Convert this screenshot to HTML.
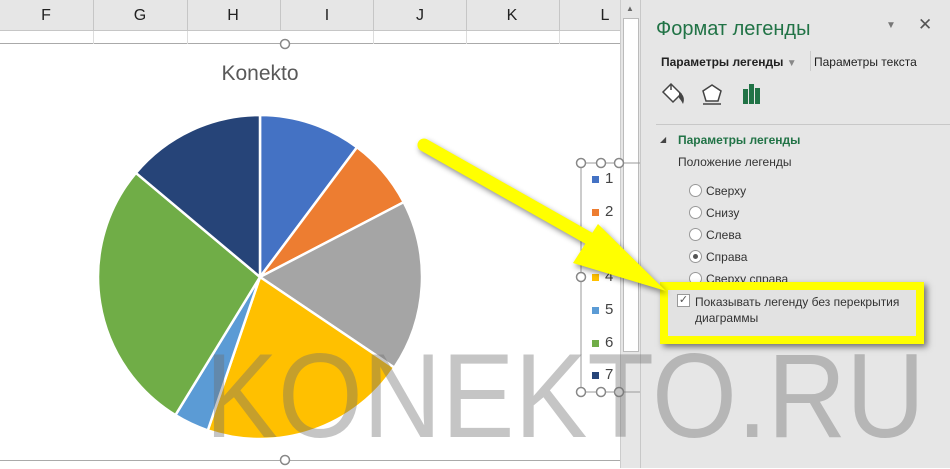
<!DOCTYPE html><html><head><meta charset="utf-8"><style>
body{margin:0;width:950px;height:468px;overflow:hidden;background:#fff;font-family:"Liberation Sans",sans-serif;position:relative}
.a{position:absolute}
.hdr{left:0;top:0;width:622px;height:30px;background:#e6e6e6;border-bottom:1px solid #c6c6c6}
.col{top:0;height:30px;border-left:1px solid #c6c6c6}
.cl{top:7px;font-size:16px;color:#222;width:20px;text-align:center}
.pane{left:640px;top:0;width:310px;height:468px;background:#e6e6e6;border-left:1px solid #c8c8c8}
.t{color:#333;font-size:12px}
.rad{width:11px;height:11px;border:1px solid #999;border-radius:50%;background:#fff}
.lg{font-size:15px;color:#444}
.sq{width:7px;height:7px}
</style></head><body>
<div class="a hdr"></div>
<div class="a col" style="left:93px"></div><div class="a col" style="left:187px"></div><div class="a col" style="left:280px"></div><div class="a col" style="left:373px"></div><div class="a col" style="left:466px"></div><div class="a col" style="left:559px"></div>
<div class="a cl" style="left:36px">F</div><div class="a cl" style="left:130px">G</div><div class="a cl" style="left:223px">H</div><div class="a cl" style="left:317px">I</div><div class="a cl" style="left:410px">J</div><div class="a cl" style="left:502px">K</div><div class="a cl" style="left:595px">L</div>
<div class="a" style="left:0;top:30px;width:620px;height:13px;border-bottom:1px solid #aaa"></div>
<div class="a" style="left:0;top:460px;width:620px;height:8px;border-top:1px solid #aaa"></div>
<div class="a" style="left:93px;top:31px;height:13px;border-left:1px solid #ddd"></div><div class="a" style="left:187px;top:31px;height:13px;border-left:1px solid #ddd"></div><div class="a" style="left:373px;top:31px;height:13px;border-left:1px solid #ddd"></div><div class="a" style="left:466px;top:31px;height:13px;border-left:1px solid #ddd"></div><div class="a" style="left:559px;top:31px;height:13px;border-left:1px solid #ddd"></div>
<div class="a" style="left:620px;top:0;width:20px;height:468px;background:#e6e6e6;border-left:1px solid #ccc"></div>
<div class="a" style="left:623px;top:18px;width:14px;height:332px;background:#fff;border:1px solid #bbb"></div>
<div class="a" style="left:626px;top:4px;font-size:8px;color:#666">▲</div>
<div class="a" style="left:0;top:62px;width:520px;text-align:center;font-size:21px;color:#595959">Konekto</div>
<svg class="a" style="left:0;top:0" width="640" height="468" id="pie">
<circle cx="285" cy="44" r="4.5" fill="#fff" stroke="#888" stroke-width="1.5"/>
<circle cx="285" cy="460" r="4.5" fill="#fff" stroke="#888" stroke-width="1.5"/>
<rect x="581" y="163" width="60" height="229" fill="none" stroke="#999"/>
<g fill="#fff" stroke="#888" stroke-width="1.5"><circle cx="581" cy="163" r="4.5"/><circle cx="601" cy="163" r="4.5"/><circle cx="619" cy="163" r="4.5"/><circle cx="581" cy="277" r="4.5"/><circle cx="581" cy="392" r="4.5"/><circle cx="601" cy="392" r="4.5"/><circle cx="619" cy="392" r="4.5"/></g>
</svg>
<div class="a sq" style="left:592px;top:176px;background:#4472c4"></div><div class="a lg" style="left:605px;top:170px">1</div>
<div class="a sq" style="left:592px;top:209px;background:#ed7d31"></div><div class="a lg" style="left:605px;top:203px">2</div>
<div class="a sq" style="left:592px;top:274px;background:#ffc000"></div><div class="a lg" style="left:605px;top:268px">4</div>
<div class="a sq" style="left:592px;top:307px;background:#5b9bd5"></div><div class="a lg" style="left:605px;top:301px">5</div>
<div class="a sq" style="left:592px;top:340px;background:#70ad47"></div><div class="a lg" style="left:605px;top:334px">6</div>
<div class="a sq" style="left:592px;top:372px;background:#264478"></div><div class="a lg" style="left:605px;top:366px">7</div>
<div class="a pane">
<div class="a" style="left:15px;top:18px;font-size:20px;color:#217346">Формат легенды</div>
<div class="a" style="left:245px;top:20px;font-size:10px;color:#777">▼</div>
<div class="a" style="left:277px;top:15px;font-size:17px;color:#555">✕</div>
<div class="a" style="left:20px;top:55px;font-size:12px;font-weight:bold;color:#222">Параметры легенды <span style="color:#888;font-size:10px">▼</span></div>
<div class="a" style="left:169px;top:51px;height:20px;border-left:1px solid #ccc"></div>
<div class="a" style="left:173px;top:55px;font-size:12px;color:#222">Параметры текста</div>
<svg class="a" style="left:18px;top:80px" width="110" height="30">
<path d="M4 12 L12 4 L22 14 L14 22 Z" fill="#fff" stroke="#444" stroke-width="1.5"/><path d="M12 4 V10" stroke="#444" stroke-width="1.5"/><path d="M20 12 Q27 16 24 24 Q22 20 20 18Z" fill="#444"/>
<path d="M53 5 L62 11 L59 21 L47 21 L44 11 Z" fill="#fff" stroke="#444" stroke-width="1.5"/><path d="M44 24 H62" stroke="#444" stroke-width="1.5"/>
<rect x="84" y="9" width="5" height="15" fill="#217346"/><rect x="90" y="4" width="5" height="20" fill="#217346"/><rect x="96" y="8" width="5" height="16" fill="#217346"/>
</svg>
<div class="a" style="left:15px;top:124px;width:295px;border-top:1px solid #c8c8c8"></div>
<div class="a" style="left:19px;top:135px;font-size:8px;color:#444">◢</div>
<div class="a" style="left:37px;top:133px;font-size:12px;font-weight:bold;color:#217346">Параметры легенды</div>
<div class="a t" style="left:37px;top:155px">Положение легенды</div>
<div class="a rad" style="left:48px;top:184px"></div><div class="a t" style="left:65px;top:184px">Сверху</div>
<div class="a rad" style="left:48px;top:206px"></div><div class="a t" style="left:65px;top:206px">Снизу</div>
<div class="a rad" style="left:48px;top:228px"></div><div class="a t" style="left:65px;top:228px">Слева</div>
<div class="a rad" style="left:48px;top:250px"></div><div class="a" style="left:52px;top:254px;width:5px;height:5px;border-radius:50%;background:#555"></div><div class="a t" style="left:65px;top:250px">Справа</div>
<div class="a rad" style="left:48px;top:272px"></div><div class="a t" style="left:65px;top:272px">Сверху справа</div>
</div>
<div class="a" style="left:660px;top:282px;width:248px;height:46px;background:#e2e2e2;border:8px solid #ffff00;box-shadow:3px 3px 6px rgba(0,0,0,.5)"></div>
<div class="a" style="left:677px;top:294px;width:11px;height:11px;border:1px solid #999;background:#fff;font-size:11px;line-height:11px;color:#555;text-align:center">✓</div>
<div class="a t" style="left:695px;top:294px;line-height:16px;color:#333">Показывать легенду без перекрытия<br>диаграммы</div>
<svg class="a" style="left:0;top:0;filter:drop-shadow(2px 3px 3px rgba(0,0,0,.45))" width="950" height="468">
<path d="M424 145 L606 248" stroke="#ffff00" stroke-width="13" stroke-linecap="round"/>
<polygon points="573,263 598,224 666,291" fill="#ffff00"/>
</svg>
<div class="a" style="left:205px;top:336px;font-size:120px;color:rgba(110,110,110,.4);line-height:120px;white-space:nowrap;transform:scaleX(0.91);transform-origin:0 0">KONEKTO.RU</div>
<script>
var s=document.getElementById('pie'),cx=260,cy=277,r=162;
var d=[[0,36.8,'#4472c4'],[36.8,62.5,'#ed7d31'],[62.5,124,'#a5a5a5'],[124,198.8,'#ffc000'],[198.8,211.5,'#5b9bd5'],[211.5,310,'#70ad47'],[310,360,'#264478']];
var h='';
function p(a){a=a*Math.PI/180;return (cx+r*Math.sin(a)).toFixed(1)+' '+(cy-r*Math.cos(a)).toFixed(1);}
d.forEach(function(x){h+='<path d="M'+cx+' '+cy+' L'+p(x[0])+' A'+r+' '+r+' 0 '+((x[1]-x[0])>180?1:0)+' 1 '+p(x[1])+' Z" fill="'+x[2]+'" stroke="#fff" stroke-width="2.5"/>';});
s.insertAdjacentHTML('afterbegin',h);
</script>
</body></html>
